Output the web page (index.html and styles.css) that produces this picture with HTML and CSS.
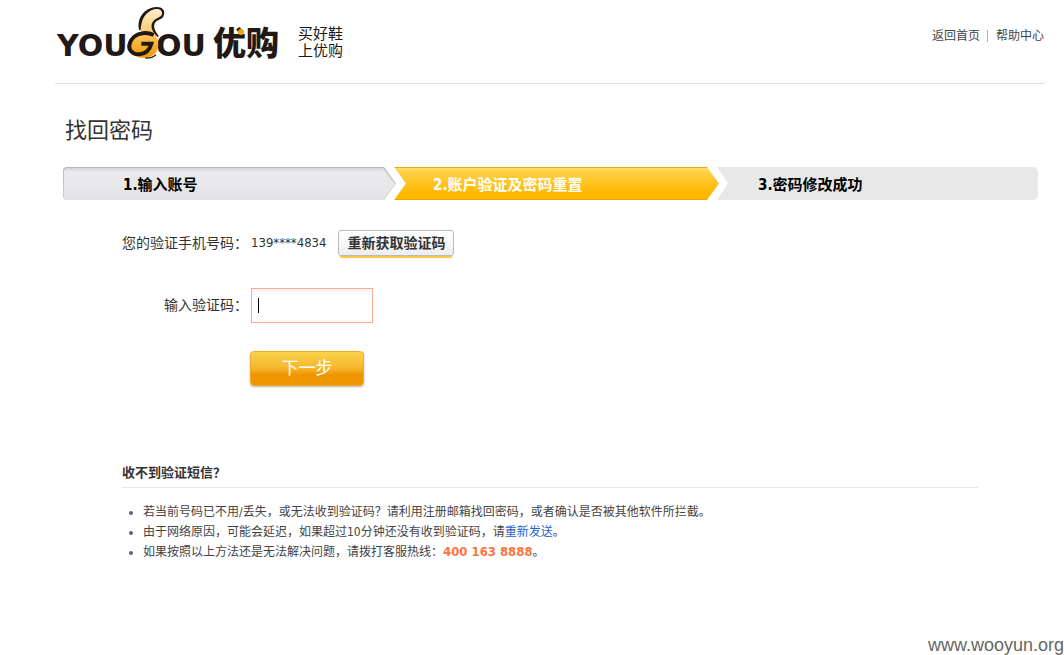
FILE: index.html
```html
<!DOCTYPE html>
<html lang="zh-CN">
<head>
    <meta charset="UTF-8">
    <meta name="viewport" content="width=device-width, initial-scale=1.0">
    <title>找回密码 - 优购</title>
    <link rel="stylesheet" href="styles.css">
</head>
<body>

    <!-- Header -->
    <header class="header">
        <a class="logo" href="#" aria-label="优购首页">
            <svg width="226" height="66" viewBox="55 0 226 66">
                <defs>
                    <linearGradient id="thumb" x1="0" y1="0" x2="0" y2="1">
                        <stop offset="0" stop-color="#fff0d2"/>
                        <stop offset="0.5" stop-color="#fcc866"/>
                        <stop offset="1" stop-color="#f39800"/>
                    </linearGradient>
                </defs>
                <g class="logo-text">
                    <text x="57" y="56">YOU</text>
                    <text x="156" y="56">OU</text>
                    <text class="logo-cn" x="213" y="55">优购</text>
                </g>
                <!-- thumb in the middle of the name -->
                <g transform="translate(50 0) scale(0.3333)">
                    <path fill="url(#thumb)" d="M342 38C334 22 306 20 286 40C267 60 270 78 274 96C244 102 233 142 247 160C260 178 302 178 317 158C329 143 326 122 318 106C304 92 303 70 316 58C327 48 343 52 342 38Z"/>
                    <path fill="#231815" d="M341 47C350 24 326 16 303 24C274 34 261 62 267 89L272 91C273 68 280 43 304 31C322 23 338 28 336 42C334 51 322 53 313 60C299 73 302 92 324 112L326 107C313 91 308 76 317 66C325 57 337 59 341 47Z"/>
                    <path fill="none" stroke="#231815" stroke-width="12" d="M311 105C286 93 256 101 244 120C229 144 243 164 268 163C289 161 300 146 304 131L274 131"/>
                    <path fill="none" stroke="#231815" stroke-width="4" d="M286 174C299 175 310 171 318 164"/>
                </g>
                <circle cx="241" cy="32" r="3" fill="#f7a400"/>
            </svg>
        </a>
        <p class="slogan">买好鞋<br>上优购</p>
        <nav class="top-nav">
            <a href="#">返回首页</a>
            <a href="#">帮助中心</a>
        </nav>
    </header>

    <!-- Find password -->
    <main class="main">
        <h1>找回密码</h1>

        <ol class="steps">
            <li class="step done"><span>1.输入账号</span></li>
            <li class="step current"><span>2.账户验证及密码重置</span></li>
            <li class="step last"><span>3.密码修改成功</span></li>
        </ol>

        <form class="form">
            <div class="row">
                <span class="label">您的验证手机号码：</span>
                <span class="phone">139****4834</span>
                <button class="btn-resend" type="button">重新获取验证码</button>
            </div>
            <div class="row row-code">
                <label class="label" for="code">输入验证码：</label>
                <div class="code-box">
                    <input type="text" id="code">
                    <span class="caret"></span>
                </div>
            </div>
            <button class="btn-next" type="submit">下一步</button>
        </form>

        <section class="tips">
            <h2>收不到验证短信？</h2>
            <ul>
                <li>若当前号码已不用/丢失，或无法收到验证码？请利用注册邮箱找回密码，或者确认是否被其他软件所拦截。</li>
                <li>由于网络原因，可能会延迟，如果超过10分钟还没有收到验证码，请<a href="#">重新发送</a>。</li>
                <li>如果按照以上方法还是无法解决问题，请拨打客服热线：<strong>400 163 8888</strong>。</li>
            </ul>
        </section>
    </main>

    <footer class="site">www.wooyun.org</footer>

</body>
</html>
```
FILE: styles.css
```css
* {
    box-sizing: border-box;
}

body {
    display: flex;
    flex-direction: column;
    min-height: 100vh;
    margin: 0;
    font-family: "DejaVu Sans Condensed", "Noto Sans CJK SC", sans-serif;
    font-size: 12px;
    line-height: 20px;
    color: #333;
    background-color: #fff;
}

h1, h2, p, ul, ol {
    margin: 0;
    padding: 0;
    font-weight: normal;
}

a {
    color: #2a5fd0;
    text-decoration: none;
}

button, input {
    font-family: inherit;
}

/* Header */
.header {
    display: flex;
    height: 84px;
    margin: 0 19px 0 55px;
    border-bottom: 1px solid #e0e0e0;
}

.logo svg {
    display: block;
}

.logo-text {
    font-family: "DejaVu Sans", sans-serif;
    font-weight: bold;
    font-size: 30px;
    fill: #231815;
}

.logo-cn {
    font-family: "Noto Sans CJK SC", sans-serif;
    font-weight: 900;
    font-size: 33px;
}

.slogan {
    margin: 26px 0 0 17px;
    font-size: 15px;
    line-height: 17px;
    color: #231815;
}

.top-nav {
    margin: 26px 1px 0 auto;
}

.top-nav a {
    float: left;
    color: #444;
}

.top-nav a + a {
    margin-left: 7px;
    padding-left: 9px;
    background: linear-gradient(#c9a6cf, #c9a6cf) no-repeat 0 4px / 1px 12px;
}

/* Content */
.main {
    flex: 1;
    margin: 31px 26px 0 63px;
}

h1 {
    padding-left: 2px;
    font-size: 22px;
    line-height: 32px;
}

/* Step bar */
.steps {
    display: grid;
    grid-template-columns: 331fr 323fr 321fr;
    margin-top: 20px;
    list-style: none;
    font-size: 15px;
    font-weight: bold;
    line-height: 37px;
    color: #000;
}

.step {
    position: relative;
    height: 33px;
    margin-right: -2px;
    padding-left: 60px;
}

.step span {
    position: relative;
}

.step.done {
    background: linear-gradient(#b9b9bb, #cdcdcf);
    border-radius: 4px 0 0 4px;
    clip-path: polygon(0 0, calc(100% - 12px) 0, 100% 50%, calc(100% - 12px) 100%, 0 100%);
}

.step.done::before {
    content: "";
    position: absolute;
    inset: 1px 1px 0 1px;
    background: linear-gradient(#d5d5d7, #ebebed 4px, #e3e3e6);
    border-radius: 3px 0 0 3px;
    clip-path: polygon(0 0, calc(100% - 12px) 0, 100% 50%, calc(100% - 12px) 100%, 0 100%);
}

.step.current {
    padding-left: 39px;
    color: #fff;
    background: linear-gradient(#e9ab12 1px, #ffdd6e 1px, #ffd045 5px, #ffb800 26px, #fdb900 32px, #eda900 32px);
    clip-path: polygon(0 0, calc(100% - 12px) 0, 100% 50%, calc(100% - 12px) 100%, 0 100%, 12px 50%);
}

.step.last {
    margin-right: 0;
    padding-left: 41px;
    background: #e8e8e8;
    border-radius: 0 5px 5px 0;
    clip-path: polygon(0 0, 100% 0, 100% 100%, 0 100%, 11px 50%);
}

/* Form */
.form {
    margin-top: 30px;
}

.row {
    display: flex;
    align-items: center;
}

.row-code {
    margin-top: 30px;
}

.label {
    width: 185px;
    margin-right: 3px;
    padding-bottom: 2px;
    text-align: right;
    font-size: 14px;
}

.phone {
    padding-bottom: 2px;
    font-size: 13px;
}

.btn-resend {
    height: 26px;
    margin: 0 0 2px 12px;
    padding: 0 8px;
    font-size: 14px;
    font-weight: bold;
    line-height: 24px;
    color: #333;
    background: linear-gradient(#fff, #eee);
    border: 1px solid #bbb;
    border-radius: 3px;
    box-shadow: 0 4px 0 -2px #fbc547;
    cursor: pointer;
}

.code-box {
    position: relative;
}

.code-box input {
    display: block;
    width: 122px;
    height: 35px;
    padding: 0 6px;
    font-size: 14px;
    background: linear-gradient(#f2f2f2, #fff 8px);
    border: 1px solid #f7b08e;
    outline: none;
}

.caret {
    position: absolute;
    top: 10px;
    left: 7px;
    width: 1px;
    height: 15px;
    background-color: #000;
}

.btn-next {
    display: block;
    width: 114px;
    height: 35px;
    margin: 28px 0 0 187px;
    padding: 0;
    font-size: 17px;
    line-height: 33px;
    color: #fff;
    background: linear-gradient(#fbd34c, #f6b52a 50%, #ee9400 70%, #f09600);
    border: 1px solid #eeaa32;
    border-radius: 4px;
    box-shadow: 0 1px 2px rgba(0, 0, 0, 0.3);
    cursor: pointer;
}

/* Tips */
.tips {
    margin: 77px 60px 0 59px;
}

.tips h2 {
    height: 25px;
    font-size: 13px;
    font-weight: bold;
    border-bottom: 1px solid #e8e8e8;
}

.tips ul {
    margin-top: 14px;
    padding-left: 21px;
    color: #444;
}

.tips li::marker {
    color: #566478;
}

.tips strong {
    font-size: 13px;
    color: #ff7340;
}

.site {
    font-family: "Liberation Sans", Arial, sans-serif;
    font-size: 18px;
    text-align: right;
    color: #666;
}
```
